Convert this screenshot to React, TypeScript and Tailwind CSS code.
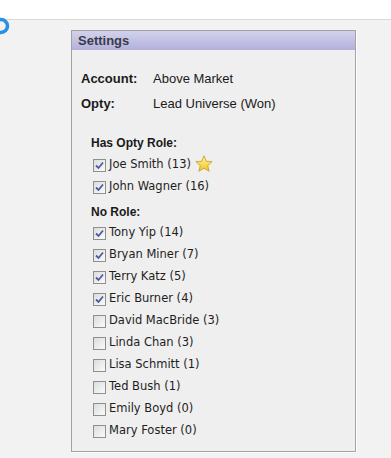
import React from 'react';

type Person = { name: string; count: number; checked: boolean; star?: boolean };

const roled: Person[] = [
  { name: 'Joe Smith', count: 13, checked: true, star: true },
  { name: 'John Wagner', count: 16, checked: true },
];

const noRole: Person[] = [
  { name: 'Tony Yip', count: 14, checked: true },
  { name: 'Bryan Miner', count: 7, checked: true },
  { name: 'Terry Katz', count: 5, checked: true },
  { name: 'Eric Burner', count: 4, checked: true },
  { name: 'David MacBride', count: 3, checked: false },
  { name: 'Linda Chan', count: 3, checked: false },
  { name: 'Lisa Schmitt', count: 1, checked: false },
  { name: 'Ted Bush', count: 1, checked: false },
  { name: 'Emily Boyd', count: 0, checked: false },
  { name: 'Mary Foster', count: 0, checked: false },
];

function CheckBox({ checked }: { checked: boolean }) {
  return (
    <span className="w-[13px] h-[13px] shrink-0 border border-[#8e8f8f] bg-gradient-to-br from-[#dcdcdc] to-[#fbfbfb] flex items-center justify-center">
      {checked && (
        <svg width="9" height="9" viewBox="0 0 9 9">
          <path d="M1 4.5 L3.5 7 L8 1.5" fill="none" stroke="#4d5a9e" strokeWidth="1.8" />
        </svg>
      )}
    </span>
  );
}

function Star() {
  return (
    <svg width="18" height="17" viewBox="0 0 24 23" className="ml-[4px] -mt-[4px]">
      <defs>
        <linearGradient id="starFill" x1="0" y1="0" x2="0" y2="1">
          <stop offset="0" stopColor="#fff6b0" />
          <stop offset="1" stopColor="#f2c419" />
        </linearGradient>
      </defs>
      <path
        d="M12 1 L15 8.5 L23 9 L17 14.3 L19 22 L12 17.8 L5 22 L7 14.3 L1 9 L9 8.5 Z"
        fill="url(#starFill)"
        stroke="#c9a227"
        strokeWidth="1.2"
        strokeLinejoin="round"
      />
    </svg>
  );
}

function PersonRow({ p }: { p: Person }) {
  return (
    <div className="h-[22px] flex items-center pl-[21px]">
      <CheckBox checked={p.checked} />
      <span className="ml-[3px] text-[11.5px] text-[#1e1e1e] font-['DejaVu_Sans',sans-serif]">
        {p.name} ({p.count})
      </span>
      {p.star && <Star />}
    </div>
  );
}

export default function App() {
  return (
    <div className="relative w-[391px] h-[458px] bg-[#f2f2f2] overflow-hidden font-['Liberation_Sans',Arial,sans-serif]">
      <div className="h-[20px] bg-white border-b border-[#d9d9d9]" />

      {/* partially visible round logo */}
      <svg width="12" height="22" viewBox="0 0 12 22" className="absolute left-0 top-[15px]">
        <circle cx="1" cy="11" r="6.5" fill="none" stroke="#2d8fe0" strokeWidth="3.5" />
      </svg>

      <div className="ml-[71px] mt-[10px] w-[285px] border border-[#a2a2a2] bg-[#efefef] shadow-[1px_1px_0_#ffffff]">
        <div className="h-[19px] bg-gradient-to-b from-[#d3d2ec] to-[#b3b1dc] flex items-center pl-[6px]">
          <span className="text-[13px] font-bold text-[#3a3a4a]">Settings</span>
        </div>

        <div className="pt-[16px] pb-[9px]">
          <div className="pl-[9px] text-[13px] text-[#1a1a1a]">
            <div className="h-[25px] flex items-center">
              <span className="w-[72px] font-bold">Account:</span>
              <span>Above Market</span>
            </div>
            <div className="h-[25px] flex items-center">
              <span className="w-[72px] font-bold">Opty:</span>
              <span>Lead Universe (Won)</span>
            </div>
          </div>

          <div className="mt-[16px] h-[22px] flex items-center pl-[19px] text-[12px] font-bold text-[#1a1a1a]">
            Has Opty Role:
          </div>
          {roled.map((p) => (
            <PersonRow key={p.name} p={p} />
          ))}

          <div className="mt-[3px] h-[21px] flex items-center pl-[19px] text-[12px] font-bold text-[#1a1a1a]">
            No Role:
          </div>
          {noRole.map((p) => (
            <PersonRow key={p.name} p={p} />
          ))}
        </div>
      </div>
    </div>
  );
}
